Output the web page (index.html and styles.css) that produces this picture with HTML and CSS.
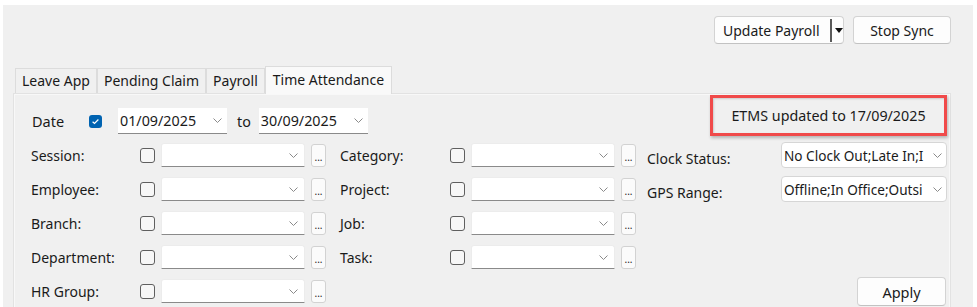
FILE: index.html
```html
<!DOCTYPE html>
<html>

<head>
  <link rel="stylesheet" href="styles.css">
</head>

<body>
  <div class="window">
<!-- toolbar -->
    <div class="toolbar">
      <div class="button split-button">
        <span class="split-label">Update Payroll</span>
        <span class="split-line"></span>
        <svg class="split-arrow" width="8" height="5" viewBox="0 0 8 5"><path d="M0 0H8L4 5Z" fill="#111"/></svg>
      </div>
      <div class="button stop-button">Stop Sync</div>
    </div>
<!-- tabs -->
    <div class="tabs">
      <div class="tab">Leave App</div>
      <div class="tab">Pending Claim</div>
      <div class="tab">Payroll</div>
      <div class="tab active">Time Attendance</div>
    </div>
<!-- panel -->
    <div class="panel">
      <div class="date-row">
        <span class="date-label">Date</span>
        <span class="check checked">
          <svg width="13" height="13" viewBox="0 0 13 13"><path d="M3.6 6.7L5.5 8.5L9.4 4.5" fill="none" stroke="#fff" stroke-width="1.2"/></svg>
        </span>
        <div class="date-picker">
          <span>01/09/2025</span>
          <svg class="chevron" width="9" height="5" viewBox="0 0 9 5"><path d="M0.5 0.5L4.5 4.5L8.5 0.5" fill="none" stroke="#8a8a8a"/></svg>
        </div>
        <span class="to">to</span>
        <div class="date-picker">
          <span>30/09/2025</span>
          <svg class="chevron" width="9" height="5" viewBox="0 0 9 5"><path d="M0.5 0.5L4.5 4.5L8.5 0.5" fill="none" stroke="#8a8a8a"/></svg>
        </div>
        <div class="etms">ETMS updated to 17/09/2025</div>
      </div>

      <div class="filters">
        <!-- row 1 -->
        <span class="label">Session:</span>
        <span class="check"></span>
        <div class="combo"><svg class="chevron" width="9" height="5" viewBox="0 0 9 5"><path d="M0.5 0.5L4.5 4.5L8.5 0.5" fill="none" stroke="#8a8a8a"/></svg></div>
        <div class="more">...</div>
        <span class="label">Category:</span>
        <span class="check"></span>
        <div class="combo"><svg class="chevron" width="9" height="5" viewBox="0 0 9 5"><path d="M0.5 0.5L4.5 4.5L8.5 0.5" fill="none" stroke="#8a8a8a"/></svg></div>
        <div class="more">...</div>
        <span class="label label-right">Clock Status:</span>
        <div class="multi">
          <span class="multi-text">No Clock Out;Late In;I</span>
          <svg class="chevron" width="9" height="5" viewBox="0 0 9 5"><path d="M0.5 0.5L4.5 4.5L8.5 0.5" fill="none" stroke="#8a8a8a"/></svg>
        </div>

        <!-- row 2 -->
        <span class="label">Employee:</span>
        <span class="check"></span>
        <div class="combo"><svg class="chevron" width="9" height="5" viewBox="0 0 9 5"><path d="M0.5 0.5L4.5 4.5L8.5 0.5" fill="none" stroke="#8a8a8a"/></svg></div>
        <div class="more">...</div>
        <span class="label">Project:</span>
        <span class="check"></span>
        <div class="combo"><svg class="chevron" width="9" height="5" viewBox="0 0 9 5"><path d="M0.5 0.5L4.5 4.5L8.5 0.5" fill="none" stroke="#8a8a8a"/></svg></div>
        <div class="more">...</div>
        <span class="label label-right">GPS Range:</span>
        <div class="multi">
          <span class="multi-text">Offline;In Office;Outsi</span>
          <svg class="chevron" width="9" height="5" viewBox="0 0 9 5"><path d="M0.5 0.5L4.5 4.5L8.5 0.5" fill="none" stroke="#8a8a8a"/></svg>
        </div>

        <!-- row 3 -->
        <span class="label">Branch:</span>
        <span class="check"></span>
        <div class="combo"><svg class="chevron" width="9" height="5" viewBox="0 0 9 5"><path d="M0.5 0.5L4.5 4.5L8.5 0.5" fill="none" stroke="#8a8a8a"/></svg></div>
        <div class="more">...</div>
        <span class="label">Job:</span>
        <span class="check"></span>
        <div class="combo"><svg class="chevron" width="9" height="5" viewBox="0 0 9 5"><path d="M0.5 0.5L4.5 4.5L8.5 0.5" fill="none" stroke="#8a8a8a"/></svg></div>
        <div class="more">...</div>
        <span></span>
        <span></span>

        <!-- row 4 -->
        <span class="label">Department:</span>
        <span class="check"></span>
        <div class="combo"><svg class="chevron" width="9" height="5" viewBox="0 0 9 5"><path d="M0.5 0.5L4.5 4.5L8.5 0.5" fill="none" stroke="#8a8a8a"/></svg></div>
        <div class="more">...</div>
        <span class="label">Task:</span>
        <span class="check"></span>
        <div class="combo"><svg class="chevron" width="9" height="5" viewBox="0 0 9 5"><path d="M0.5 0.5L4.5 4.5L8.5 0.5" fill="none" stroke="#8a8a8a"/></svg></div>
        <div class="more">...</div>
        <span></span>
        <span></span>

        <!-- row 5 -->
        <span class="label">HR Group:</span>
        <span class="check"></span>
        <div class="combo"><svg class="chevron" width="9" height="5" viewBox="0 0 9 5"><path d="M0.5 0.5L4.5 4.5L8.5 0.5" fill="none" stroke="#8a8a8a"/></svg></div>
        <div class="more">...</div>
        <div class="button apply-button">Apply</div>
      </div>
    </div>
  </div>
</body>

</html>
```

FILE: styles.css
```css
body {
  margin: 0;
  background-color: #ffffff;
  font-family: "Noto Sans", sans-serif;
  font-size: 14px;
  color: #1a1a1a;
}

.window {
  margin: 5px 4px 0 3px;
  height: 302px;
  background-color: #f0f0f0;
  overflow: hidden;
}

/* top buttons */
.toolbar {
  display: flex;
  justify-content: flex-end;
  gap: 9px;
  padding: 11px 22px 0 0;
}

.button {
  display: flex;
  align-items: center;
  justify-content: center;
  box-sizing: border-box;
  height: 28px;
  background-color: #fdfdfd;
  border: 1px solid #d3d3d3;
  border-bottom-color: #c2c2c2;
  border-radius: 4px;
  cursor: pointer;
}

.split-button {
  width: 130px;
  justify-content: flex-start;
  padding-left: 8px;
}

.split-line {
  width: 2px;
  height: 23px;
  margin-left: 10px;
  background-color: #5a5a5a;
}

.split-arrow {
  margin-left: 3px;
}

.stop-button {
  width: 98px;
}

/* tabs */
.tabs {
  display: flex;
  align-items: flex-end;
  height: 27px;
  margin: 22px 0 0 12px;
}

.tab {
  height: 25px;
  box-sizing: border-box;
  padding: 1px 6px 0 6px;
  border: 1px solid #dcdcdc;
  border-bottom: none;
  line-height: 22px;
}

.tab.active {
  position: relative;
  height: 28px;
  margin-bottom: -1px;
  padding: 0 7px;
  background-color: #f9f9f9;
  line-height: 26px;
  z-index: 1;
}

.panel {
  margin: 0 22px 0 10px;
  height: 260px;
  padding: 10px 3px 0 17px;
  border: 1px solid #e2e2e2;
  box-shadow: inset 0 0 0 1px #f8f8f8;
}

/* date row */
.date-row {
  display: flex;
  align-items: center;
  height: 34px;
}

.date-label {
  width: 57px;
  margin-left: 1px;
  font-size: 14.5px;
}

.check {
  display: block;
  box-sizing: border-box;
  width: 15px;
  height: 15px;
  background-color: #f7f7f7;
  border: 1px solid #5f5f5f;
  border-radius: 3px;
}

.check.checked {
  width: 13px;
  height: 13px;
  background-color: #0063b1;
  border: none;
}

.check.checked svg {
  display: block;
}

.date-picker {
  display: flex;
  align-items: center;
  justify-content: space-between;
  box-sizing: border-box;
  width: 109px;
  height: 26px;
  margin-left: 16px;
  padding: 0 5px 0 2px;
  background-color: #ffffff;
  border-bottom: 1px solid #8a8a8a;
  font-size: 14.3px;
}

.to {
  margin: 0 0 0 10px;
  font-size: 14.3px;
}

.to + .date-picker {
  margin-left: 8px;
}

.etms {
  align-self: flex-start;
  display: flex;
  align-items: center;
  justify-content: center;
  box-sizing: border-box;
  width: 237px;
  height: 41px;
  margin: -9px 0 0 auto;
  border: 3px solid #f04a4a;
  box-shadow: 1px 2px 3px rgba(0, 0, 0, 0.25), inset 1px 1px 2px rgba(0, 0, 0, 0.15);
  font-size: 14.3px;
}

/* filter grid */
.filters {
  display: grid;
  grid-template-columns: 109px 21px 150px 29px 110px 21px 150px 26px 134px 166px;
  grid-auto-rows: 34px;
  align-items: center;
}

.label {
  padding-top: 1px;
}

.label-right {
  padding-top: 6px;
}

.combo {
  display: flex;
  align-items: center;
  justify-content: flex-end;
  box-sizing: border-box;
  width: 144px;
  height: 24px;
  padding-right: 6px;
  background-color: #ffffff;
  border: 1px solid #ececec;
  border-bottom-color: #8a8a8a;
  border-radius: 3px 3px 0 0;
}

.more {
  display: flex;
  align-items: flex-end;
  justify-content: center;
  box-sizing: border-box;
  width: 15px;
  height: 23px;
  padding-bottom: 4px;
  background-color: #fbfbfb;
  border: 1px solid #d2d2d2;
  border-radius: 3px;
  font-size: 10px;
  line-height: 10px;
  cursor: pointer;
}

.multi {
  display: flex;
  align-items: center;
  justify-content: space-between;
  gap: 4px;
  box-sizing: border-box;
  width: 166px;
  height: 26px;
  padding: 0 4px 0 2px;
  background-color: #ffffff;
  border: 1px solid #d6d6d6;
  border-radius: 4px;
}

.multi-text {
  white-space: nowrap;
  font-size: 13.6px;
}

.chevron {
  flex-shrink: 0;
}

.apply-button {
  grid-column: 9 / 11;
  justify-self: end;
  width: 89px;
  height: 29px;
  margin: 1px 1px 0 0;
  font-size: 14.5px;
}
```
